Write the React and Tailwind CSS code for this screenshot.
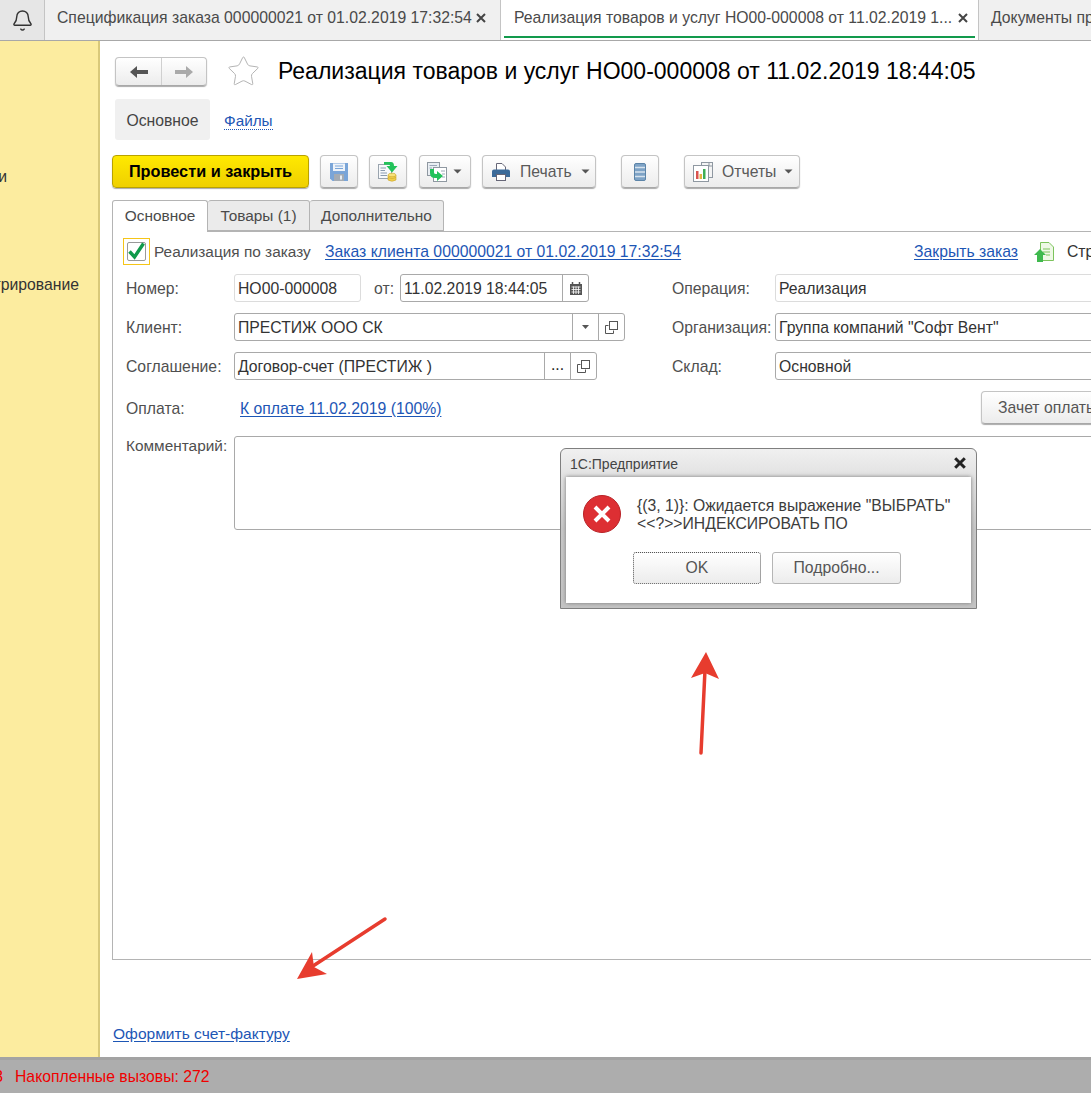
import React from "react";
import { Bell, Star } from "lucide-react";

const Close = ({ c = "#444", s = 10, w = 2 }) => (
  <svg width={s} height={s} viewBox="0 0 10 10"><path d="M1 1 L9 9 M9 1 L1 9" stroke={c} strokeWidth={w} /></svg>
);
const Caret = () => <svg width="9" height="5" viewBox="0 0 9 5"><path d="M0.5 0.5 H8.5 L4.5 4.5Z" fill="#555" /></svg>;
const Copy = () => (
  <svg width="13" height="13" viewBox="0 0 13 13" fill="none" stroke="#555"><rect x="4.5" y="0.5" width="8" height="8" fill="#fff" /><path d="M3.5 4.5 H0.5 V12.5 H8.5 V9.5" /></svg>
);
const Btn = ({ className = "", children }) => (
  <div className={"flex items-center shrink-0 h-[33px] rounded-[4px] border border-[#c4c4c4] border-b-[#a8a8a8] bg-gradient-to-b from-white to-[#ececec] shadow-[0_1px_1px_#aaa] " + className}>{children}</div>
);
const Field = ({ className = "", light, text, children }) => (
  <div className={"flex items-center h-[28px] rounded-[3px] border bg-white text-[#333] " + (light ? "border-[#dcdcdc] " : "border-[#a9a9a9] ") + className}>
    <span className="flex-1 pt-[2px] whitespace-nowrap">{text}</span>
    {children}
  </div>
);
const Label = ({ className = "", children }) => <div className={"shrink-0 text-[#4f4f4f] whitespace-nowrap " + className}>{children}</div>;
const Side = ({ className = "", children }) => <div className={"flex items-center justify-center h-full border-l border-[#a9a9a9] " + className}>{children}</div>;
const A = ({ className = "", children }) => <span className={"text-[#1d56b5] underline underline-offset-2 whitespace-nowrap " + className}>{children}</span>;

const SaveIcon = () => (
  <svg width="18" height="18" viewBox="0 0 18 18"><path d="M0 0 H18 V18 H2.500 L0 15.500Z" fill="#7aa5d8" /><rect x="3" y="0.500" width="12" height="7.500" fill="#eef3f9" /><path d="M5 3 H13 M5 5.500 H13" stroke="#7aa5d8" /><rect x="4" y="11" width="10" height="7" fill="#a4abb3" /><rect x="10" y="12.500" width="2" height="4" fill="#e8edf2" /></svg>
);
const PostIcon = () => (
  <svg width="20" height="20" viewBox="0 0 20 20"><rect x="0.500" y="2.500" width="13" height="14" fill="#f7f9fb" stroke="#9aa4ae" /><path d="M2.500 6 H8 M2.500 8.500 H7 M2.500 11 H9 M2.500 13.500 H9" stroke="#8a9bb0" /><path d="M6 0 H13 Q16 0 16 4 H19.500 L14 10.500 L8.500 4 H12 Q12 2.800 10.500 2.800 H6Z" fill="#22c25a" /><path d="M10 13 V18 Q14 20.500 18 18 V13" fill="#f1cf4a" stroke="#c9a52c" strokeWidth="0.600" /><ellipse cx="14" cy="13" rx="4" ry="1.800" fill="#f8e27a" stroke="#c9a52c" strokeWidth="0.600" /><path d="M10 15.500 Q14 18 18 15.500" fill="none" stroke="#c9a52c" strokeWidth="0.600" /></svg>
);
const DocsIcon = () => (
  <svg width="20" height="20" viewBox="0 0 20 20"><rect x="0.500" y="0.500" width="12" height="13" fill="#e9eef3" stroke="#8f98a1" /><rect x="6.500" y="5.500" width="13" height="14" fill="#fff" stroke="#8f98a1" /><path d="M2.500 3.500 H10 M2.500 6 H5 M14 9 H18 M15 12 H18 M15 15 H18" stroke="#9aa8b8" /><path d="M3 7 H7 V10.500 Q7 12 9 12 H10 V9 L16 14 L10 19 V16 H8 Q3 16 3 11Z" fill="#22c25a" /></svg>
);
const PrintIcon = () => (
  <svg width="18" height="18" viewBox="0 0 18 18"><path d="M4.500 0.500 H10 L13.500 4 V8 H4.500Z" fill="#fff" stroke="#667" /><path d="M2 6.500 H16 Q18 6.500 18 8.500 V14 H14 V11 H4 V14 H0 V8.500 Q0 6.500 2 6.500Z" fill="#3c6b99" /><rect x="4.500" y="11.500" width="9" height="6" fill="#fff" stroke="#667" /></svg>
);
const ListIcon = () => (
  <svg width="12" height="18" viewBox="0 0 12 18"><rect x="0.500" y="0.500" width="11" height="17" rx="1.500" fill="#7ea3c6" stroke="#5c84a8" /><path d="M1 4.500 H11 M1 9 H11 M1 13.500 H11" stroke="#d7e3ee" strokeWidth="1.400" /></svg>
);
const ReportIcon = () => (
  <svg width="20" height="20" viewBox="0 0 20 20"><rect x="8.500" y="0.500" width="11" height="15" fill="#f4f4f4" stroke="#8f98a1" /><path d="M16 1 V4 H19" fill="none" stroke="#8f98a1" /><rect x="0.500" y="3.500" width="15" height="16" fill="#fff" stroke="#8f98a1" /><rect x="3" y="9" width="2.500" height="8" fill="#d9534f" /><rect x="6.500" y="12" width="2.500" height="5" fill="#e8b33f" /><rect x="10" y="7" width="2.500" height="10" fill="#3fae55" /></svg>
);

function Sidebar() {
  return (
    <div className="shrink-0 w-[100px] bg-[#fcec9f] border-r-[2px] border-[#d9c97a] overflow-hidden text-[#333]">
      <div className="flex justify-end w-[7px] mt-[124px] whitespace-nowrap"><span className="shrink-0">Продажи</span></div>
      <div className="flex justify-end w-[79px] mt-[84px] whitespace-nowrap"><span className="shrink-0">Администрирование</span></div>
    </div>
  );
}

function Toolbar() {
  return (
    <div className="flex items-center mt-[15px] ml-[12px] text-[#4f4f4f]">
      <div className="flex items-center justify-center shrink-0 w-[197px] h-[33px] rounded-[4px] border border-[#b9a200] bg-gradient-to-b from-[#ffe900] to-[#efd000] shadow-[0_1px_1px_#aaa] font-bold text-[16.300px] text-black">Провести и закрыть</div>
      <Btn className="w-[38px] ml-[11px] justify-center"><SaveIcon /></Btn>
      <Btn className="w-[38px] ml-[11px] justify-center"><PostIcon /></Btn>
      <Btn className="w-[52px] ml-[12px] pl-[7px] gap-[6px]"><DocsIcon /><Caret /></Btn>
      <Btn className="w-[114px] ml-[11px] pl-[9px]"><PrintIcon /><span className="ml-[10px] text-[#5a5a5a]">Печать</span><span className="ml-[9px] flex"><Caret /></span></Btn>
      <Btn className="w-[38px] ml-[25px] justify-center"><ListIcon /></Btn>
      <Btn className="w-[116px] ml-[25px] pl-[8px]"><ReportIcon /><span className="ml-[9px] text-[#5a5a5a]">Отчеты</span><span className="ml-[8px] flex"><Caret /></span></Btn>
    </div>
  );
}

function Form() {
  return (
    <div className="flex flex-col ml-[12px] w-[1000px] h-[729px] shrink-0 border-l border-t border-b border-[#b4b4b4] pt-[6px]">
      <div className="flex items-center h-[27px] whitespace-nowrap">
        <div className="flex items-center justify-center shrink-0 w-[27px] h-[27px] ml-[10px] border border-[#f5c518]">
          <div className="flex items-center justify-center w-[19px] h-[19px] border border-[#999] rounded-[2px] bg-white overflow-visible">
            <svg className="shrink-0" width="19" height="19" viewBox="0 0 19 19"><path d="M2.500 9.500 L7.500 15 L16.500 1.500" fill="none" stroke="#0f9a4a" strokeWidth="3.400" /></svg>
          </div>
        </div>
        <Label className="w-[171px] ml-[4px] text-[15.400px]">Реализация по заказу</Label>
        <div className="w-[589px] shrink-0"><A>Заказ клиента 000000021 от 01.02.2019 17:32:54</A></div>
        <div className="w-[120px] shrink-0"><A>Закрыть заказ</A></div>
        <svg className="shrink-0" width="20" height="20" viewBox="0 0 20 20"><path d="M6.500 0.500 H15 L19.500 5 V18.500 H6.500Z" fill="#eef8e6" stroke="#7cc35c" /><path d="M9 7 H16 M9 10 H16 M12 13 H16" stroke="#7cc35c" /><path d="M6 7 L12 13 H9 V20 H3 V13 H0Z" fill="#3fb94e" /></svg>
        <span className="ml-[13px] text-[#333]">Страница</span>
      </div>

      <div className="grid grid-cols-[546px_1fr] pl-[13px] mt-[9px]">
        <div className="flex items-center">
          <Label className="w-[108px] pt-[2px]">Номер:</Label>
          <Field light className="w-[127px] pl-[3px]" text="НО00-000008" />
          <Label className="ml-[13px] w-[26px] pt-[2px]">от:</Label>
          <Field className="w-[189px] pl-[3px]" text="11.02.2019 18:44:05">
            <Side className="w-[26px]">
              <svg width="12" height="13" viewBox="0 0 12 13"><path d="M0 2 H12 V13 H0Z" fill="#555" /><path d="M2.500 0 V3 M9.500 0 V3" stroke="#555" strokeWidth="1.500" /><path d="M1.500 5 H10.500 M1.500 7.500 H10.500 M1.500 10 H10.500 M3.500 4.500 V12 M6 4.500 V12 M8.500 4.500 V12" stroke="#fff" strokeWidth="0.800" /></svg>
            </Side>
          </Field>
        </div>
        <div className="flex items-center">
          <Label className="w-[103px] pt-[2px]">Операция:</Label>
          <Field light className="flex-1 pl-[3px]" text="Реализация" />
        </div>
      </div>

      <div className="grid grid-cols-[546px_1fr] pl-[13px] mt-[11px]">
        <div className="flex items-center">
          <Label className="w-[108px] pt-[2px]">Клиент:</Label>
          <Field className="w-[391px] pl-[3px]" text="ПРЕСТИЖ ООО СК">
            <Side className="w-[26px]"><svg width="7" height="4" viewBox="0 0 7 4"><path d="M0 0 H7 L3.500 4Z" fill="#555" /></svg></Side>
            <Side className="w-[26px]"><Copy /></Side>
          </Field>
        </div>
        <div className="flex items-center">
          <Label className="w-[103px] pt-[2px]">Организация:</Label>
          <Field className="flex-1 pl-[3px]" text={'Группа компаний "Софт Вент"'} />
        </div>
      </div>

      <div className="grid grid-cols-[546px_1fr] pl-[13px] mt-[11px]">
        <div className="flex items-center">
          <Label className="w-[108px] pt-[2px]">Соглашение:</Label>
          <Field className="w-[363px] pl-[3px]" text="Договор-счет (ПРЕСТИЖ )">
            <Side className="w-[26px] pb-[2px] text-[#222]">...</Side>
            <Side className="w-[26px]"><Copy /></Side>
          </Field>
        </div>
        <div className="flex items-center">
          <Label className="w-[103px] pt-[2px]">Склад:</Label>
          <Field className="flex-1 pl-[3px]" text="Основной" />
        </div>
      </div>

      <div className="grid grid-cols-[546px_1fr] pl-[13px] mt-[11px]">
        <div className="flex items-center">
          <Label className="w-[114px] pt-[2px]">Оплата:</Label>
          <div className="pt-[2px]"><A>К оплате 11.02.2019 (100%)</A></div>
        </div>
        <div className="flex">
          <Btn className="ml-[309px] w-[200px] pl-[16px] text-[#555] whitespace-nowrap">Зачет оплаты</Btn>
        </div>
      </div>

      <div className="flex pl-[13px] mt-[12px]">
        <Label className="w-[108px] pt-[1px] leading-[18px] text-[15.400px]">Комментарий:</Label>
        <div className="flex-1 h-[94px] rounded-[3px] border border-[#a9a9a9]" />
      </div>
    </div>
  );
}

function Dialog() {
  return (
    <div className="absolute left-[560px] top-[448px] w-[417px] h-[161px] flex flex-col rounded-t-[6px] border border-[#7f7f7f] bg-gradient-to-b from-[#f0f0f0] via-[#c8c8c8] to-[#c4c4c4] text-[#3c3c3c]">
      <div className="flex items-center justify-between h-[28px] shrink-0 pl-[9px] pr-[10px] text-[14px] text-[#444]">
        <span className="pt-[2px]">1С:Предприятие</span>
        <Close c="#222" s={12} w={2.500} />
      </div>
      <div className="flex-1 mx-[5px] mb-[5px] bg-white shadow-[0_0_4px_#777] flex flex-col">
        <div className="flex pl-[17px] pt-[18px]">
          <svg className="shrink-0" width="38" height="38" viewBox="0 0 38 38"><circle cx="19" cy="19" r="18.500" fill="#dd2f33" stroke="#b82226" /><path d="M12 12 L26 26 M26 12 L12 26" stroke="#fff" strokeWidth="4" /></svg>
          <div className="ml-[16px] leading-[18px] pt-[2px] whitespace-nowrap">
            <div>{'{(3, 1)}: Ожидается выражение "ВЫБРАТЬ"'}</div>
            <div>{"<<?>>ИНДЕКСИРОВАТЬ ПО"}</div>
          </div>
        </div>
        <div className="flex ml-[67px] mt-[19px] gap-[11px]">
          <div className="flex items-center justify-center w-[128px] h-[32px] rounded-[3px] border border-dotted border-[#555] bg-gradient-to-b from-white to-[#ececec] text-[#555]">OK</div>
          <div className="flex items-center justify-center w-[129px] h-[32px] rounded-[3px] border border-[#b5b5b5] bg-gradient-to-b from-white to-[#ececec] text-[#555]">Подробно...</div>
        </div>
      </div>
    </div>
  );
}

export default function App() {
  return (
    <div className="relative w-[1091px] h-[1093px] overflow-hidden flex flex-col bg-white text-[15.750px] font-['Liberation_Sans',Arial,sans-serif]">
      <div className="flex shrink-0 h-[41px] bg-[#f0f0f0] border-b border-[#a8a8a8] text-[#4a4a4a] whitespace-nowrap">
        <div className="flex items-center justify-center shrink-0 w-[45px] bg-[#e6e6e6] border-r border-[#c4c4c4]">
          <Bell size={23} strokeWidth={1.500} color="#333" />
        </div>
        <div className="flex items-center shrink-0 w-[456px] pl-[12px] pb-[5px] border-r border-[#c4c4c4]">
          <span>Спецификация заказа 000000021 от 01.02.2019 17:32:54</span>
          <span className="ml-[4px] flex"><Close /></span>
        </div>
        <div className="relative flex items-center shrink-0 w-[478px] pl-[13px] pb-[5px] bg-white border-r border-[#c4c4c4]">
          <span>Реализация товаров и услуг НО00-000008 от 11.02.2019 1...</span>
          <span className="ml-[6px] flex"><Close /></span>
          <div className="absolute left-[3px] right-[3px] top-[36px] h-[2px] bg-[#129a4c]" />
        </div>
        <div className="flex items-center pl-[12px] pb-[5px]">Документы продажи</div>
      </div>

      <div className="flex flex-1 min-h-0">
        <Sidebar />
        <div className="flex-1 min-w-0 flex flex-col">
          <div className="flex items-center mt-[16px] ml-[15px] h-[29px] shrink-0">
            <div className="flex h-[29px] w-[92px] rounded-[4px] border border-[#c4c4c4] border-b-[#a8a8a8] bg-gradient-to-b from-white to-[#ececec] shadow-[0_1px_1px_#aaa]">
              <div className="flex items-center justify-center w-[46px] border-r border-[#d0d0d0]">
                <svg width="18" height="12" viewBox="0 0 18 12"><path d="M0 6 L7 0 V4 H18 V8 H7 V12Z" fill="#555" /></svg>
              </div>
              <div className="flex items-center justify-center flex-1">
                <svg width="18" height="12" viewBox="0 0 18 12"><path d="M18 6 L11 0 V4 H0 V8 H11 V12Z" fill="#aaa" /></svg>
              </div>
            </div>
            <Star className="ml-[19px] shrink-0" size={35} strokeWidth={0.650} color="#b0b0b0" />
            <div className="ml-[17px] text-[23px] text-black whitespace-nowrap">Реализация товаров и услуг НО00-000008 от 11.02.2019 18:44:05</div>
          </div>

          <div className="flex items-center mt-[13px] ml-[15px] h-[41px] shrink-0">
            <div className="flex items-center justify-center w-[95px] h-[41px] pt-[2px] bg-[#f0f0f0] rounded-[3px] text-[#444]">Основное</div>
            <span className="ml-[14px] mt-[2px] text-[15.300px] text-[#1d56b5] border-b border-dotted border-[#1d56b5] leading-[17px]">Файлы</span>
          </div>

          <Toolbar />

          <div className="flex mt-[12px] ml-[12px] h-[31px] shrink-0 text-[#4a4a4a] text-[15.400px] relative z-10">
            <div className="flex items-center justify-center w-[96px] bg-white border border-b-0 border-[#b4b4b4] rounded-t-[3px] h-[32px] pb-[2px]">Основное</div>
            <div className="flex items-center justify-center w-[102px] bg-[#ebebeb] border border-l-0 border-[#b4b4b4] rounded-t-[3px]">Товары (1)</div>
            <div className="flex items-center justify-center w-[134px] bg-[#ebebeb] border border-l-0 border-[#b4b4b4] rounded-t-[3px]">Дополнительно</div>
          </div>

          <Form />

          <div className="ml-[13px] mt-[62px] text-[15.550px]"><A>Оформить счет-фактуру</A></div>
        </div>
      </div>

      <div className="flex items-center shrink-0 h-[36px] bg-[#adadad] border-t-[3px] border-[#a3a3a3] text-[#f00000] whitespace-nowrap">
        <div className="flex justify-end w-[3px] overflow-hidden"><span className="shrink-0">3</span></div>
        <span className="ml-[12px]">Накопленные вызовы: 272</span>
      </div>

      <Dialog />

      <svg className="absolute left-0 top-0 pointer-events-none" width="1091" height="1093" viewBox="0 0 1091 1093">
        <path d="M701 753 L705 670" stroke="#e73c2e" strokeWidth="3.500" strokeLinecap="round" fill="none" />
        <path d="M706 652 L691 678 L705 673 L719 679Z" fill="#e73c2e" />
        <path d="M385 919 L313 966" stroke="#e73c2e" strokeWidth="3.500" strokeLinecap="round" fill="none" />
        <path d="M297 979 L312 952 L314 967 L327 974Z" fill="#e73c2e" />
      </svg>
    </div>
  );
}
